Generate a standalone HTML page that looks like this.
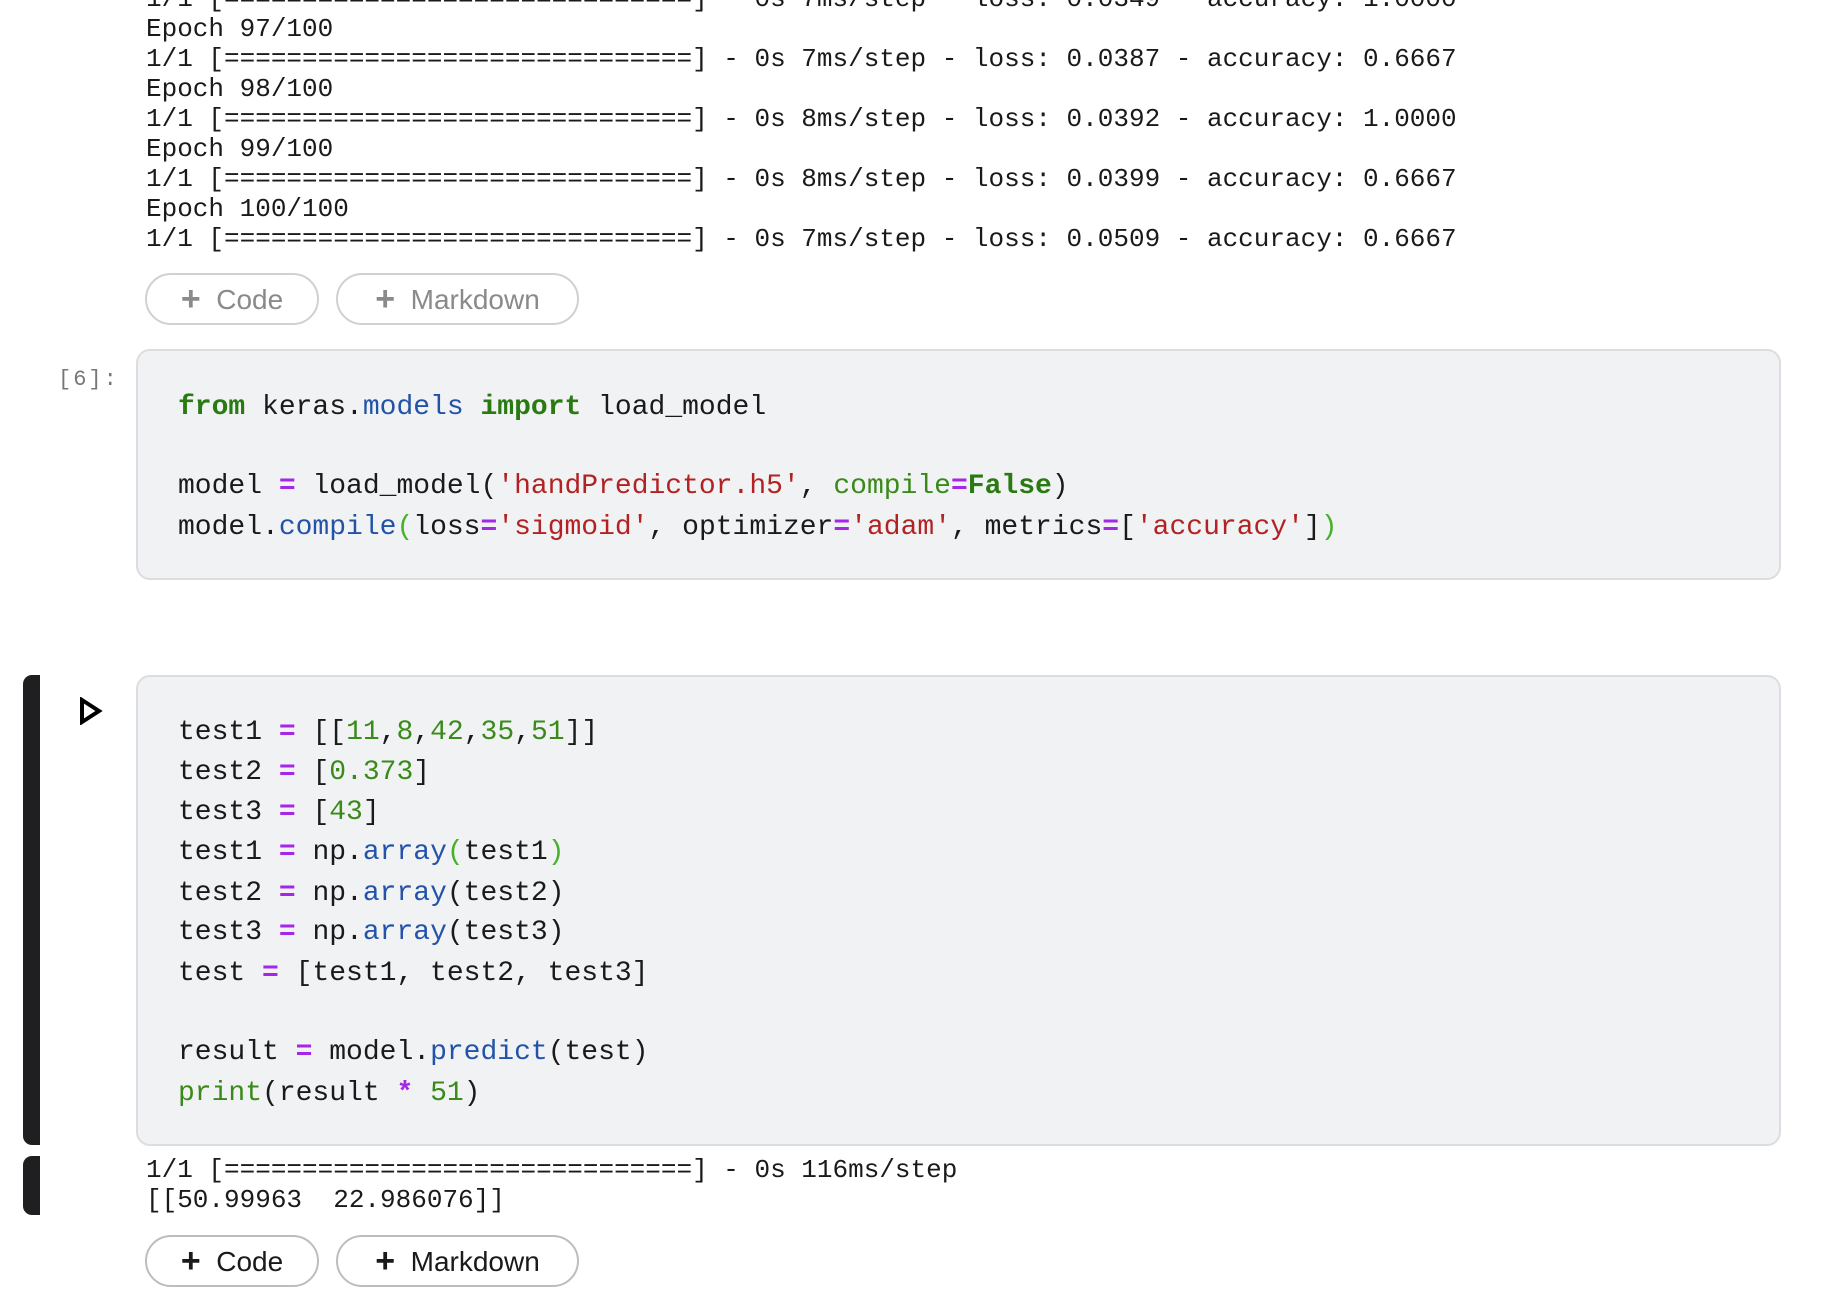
<!DOCTYPE html>
<html><head><meta charset="utf-8"><style>
body{margin:0;width:1828px;height:1308px;background:#fff;position:relative;overflow:hidden;font-family:"Liberation Mono",monospace;}
.o{position:absolute;left:146px;font-size:26px;line-height:30px;height:30px;white-space:pre;color:#1a1a1a;}
.c{position:absolute;left:178px;font-size:28px;line-height:40px;height:40px;white-space:pre;color:#1a1a1a;}
.btn{position:absolute;height:52px;border:2px solid #d0d0d0;border-radius:28px;box-sizing:border-box;font-family:"Liberation Sans",sans-serif;font-size:28px;line-height:48px;color:#8a8a8a;text-align:center;background:#fff;}
.btn.d{color:#1a1a1a;border-color:#bdbdbd}
.p{font-size:34px;font-weight:bold;vertical-align:-1px}
.box{position:absolute;left:136px;width:1645px;background:#f1f2f4;border:2px solid #dcdde0;border-radius:14px;box-sizing:border-box;}
.k{color:#2a7a12;font-weight:bold}.n{color:#2253a8}.s{color:#b22222}.e{color:#a626e8;font-weight:bold}.g{color:#3a8a1a}.b{color:#46b02a}
.bar{position:absolute;left:23px;width:17px;background:#1f1f22;border-radius:9px 0 0 9px;}
</style></head><body>
<div class="o" style="top:-16px">1/1 [==============================] - 0s 7ms/step - loss: 0.0349 - accuracy: 1.0000</div>
<div class="o" style="top:14px">Epoch 97/100</div>
<div class="o" style="top:44px">1/1 [==============================] - 0s 7ms/step - loss: 0.0387 - accuracy: 0.6667</div>
<div class="o" style="top:74px">Epoch 98/100</div>
<div class="o" style="top:104px">1/1 [==============================] - 0s 8ms/step - loss: 0.0392 - accuracy: 1.0000</div>
<div class="o" style="top:134px">Epoch 99/100</div>
<div class="o" style="top:164px">1/1 [==============================] - 0s 8ms/step - loss: 0.0399 - accuracy: 0.6667</div>
<div class="o" style="top:194px">Epoch 100/100</div>
<div class="o" style="top:224px">1/1 [==============================] - 0s 7ms/step - loss: 0.0509 - accuracy: 0.6667</div>

<div class="btn" style="left:145px;top:273px;width:174px"><span class="p">+</span>&nbsp; Code</div>
<div class="btn" style="left:336px;top:273px;width:243px"><span class="p">+</span>&nbsp; Markdown</div>

<div style="position:absolute;left:58px;top:367px;font-size:22px;color:#777;letter-spacing:2px">[6]:</div>
<div class="box" style="top:349px;height:231px"></div>
<div class="c" style="top:388px"><span class="k">from</span> keras.<span class="n">models</span> <span class="k">import</span> load_model</div>
<div class="c" style="top:467px">model <span class="e">=</span> load_model(<span class="s">'handPredictor.h5'</span>, <span class="g">compile</span><span class="e">=</span><span class="k">False</span>)</div>
<div class="c" style="top:508px">model.<span class="n">compile</span><span class="b">(</span>loss<span class="e">=</span><span class="s">'sigmoid'</span>, optimizer<span class="e">=</span><span class="s">'adam'</span>, metrics<span class="e">=</span>[<span class="s">'accuracy'</span>]<span class="b">)</span></div>

<div class="bar" style="top:675px;height:470px"></div>
<div class="bar" style="top:1156px;height:59px"></div>
<svg style="position:absolute;left:79px;top:697px" width="24" height="28"><path d="M3 3 L20 14 L3 25 Z" fill="none" stroke="#000" stroke-width="4" stroke-linejoin="miter"/></svg>
<div class="box" style="top:675px;height:471px"></div>
<div class="c" style="top:713px">test1 <span class="e">=</span> [[<span class="g">11</span>,<span class="g">8</span>,<span class="g">42</span>,<span class="g">35</span>,<span class="g">51</span>]]</div>
<div class="c" style="top:753px">test2 <span class="e">=</span> [<span class="g">0.373</span>]</div>
<div class="c" style="top:793px">test3 <span class="e">=</span> [<span class="g">43</span>]</div>
<div class="c" style="top:833px">test1 <span class="e">=</span> np.<span class="n">array</span><span class="b">(</span>test1<span class="b">)</span></div>
<div class="c" style="top:874px">test2 <span class="e">=</span> np.<span class="n">array</span>(test2)</div>
<div class="c" style="top:913px">test3 <span class="e">=</span> np.<span class="n">array</span>(test3)</div>
<div class="c" style="top:954px">test <span class="e">=</span> [test1, test2, test3]</div>
<div class="c" style="top:1033px">result <span class="e">=</span> model.<span class="n">predict</span>(test)</div>
<div class="c" style="top:1074px"><span class="g">print</span>(result <span class="e">*</span> <span class="g">51</span>)</div>

<div class="o" style="top:1155px">1/1 [==============================] - 0s 116ms/step</div>
<div class="o" style="top:1185px">[[50.99963  22.986076]]</div>

<div class="btn d" style="left:145px;top:1235px;width:174px"><span class="p">+</span>&nbsp; Code</div>
<div class="btn d" style="left:336px;top:1235px;width:243px"><span class="p">+</span>&nbsp; Markdown</div>
</body></html>
